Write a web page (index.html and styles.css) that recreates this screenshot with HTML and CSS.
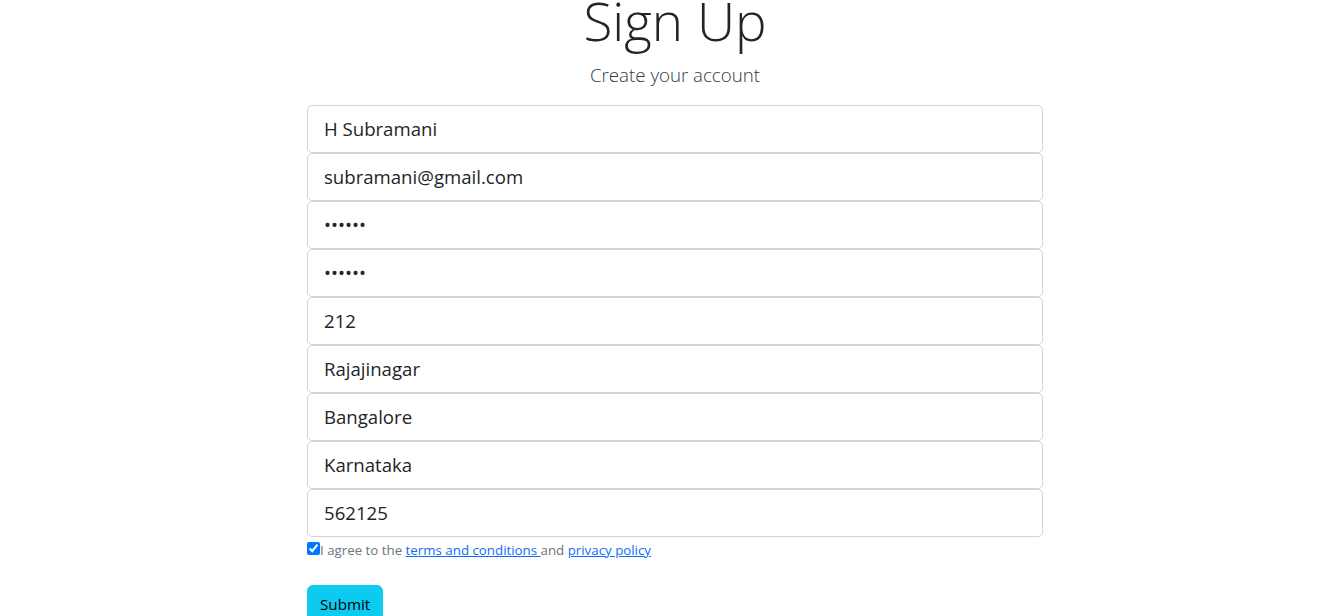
FILE: index.html
```html
<!DOCTYPE html>
<html lang="en">
<head>
<meta charset="utf-8">
<title>Sign Up</title>
<link rel="stylesheet" href="styles.css">
</head>
<body>
<main class="signup">
  <h1 class="title">Sign Up</h1>
  <p class="lead">Create your account</p>
  <form class="form">
    <div class="fields">
      <input class="field" type="text" value="H Subramani">
      <input class="field" type="email" value="subramani@gmail.com">
      <input class="field" type="password" value="123456">
      <input class="field" type="password" value="123456">
      <input class="field" type="text" value="212">
      <input class="field" type="text" value="Rajajinagar">
      <input class="field" type="text" value="Bangalore">
      <input class="field" type="text" value="Karnataka">
      <input class="field" type="text" value="562125">
    </div>
    <div class="agree">
      <input class="check" type="checkbox" checked>
      <label class="agree-text">I agree to the <a href="#" class="link">terms and conditions </a>and <a href="#" class="link">privacy policy</a></label>
    </div>
    <button class="btn" type="button">Submit</button>
  </form>
</main>
</body>
</html>
```

FILE: styles.css
```css
html, body {
  margin: 0;
  padding: 0;
  background: #fff;
}
body {
  padding-left: 7px;
  font-family: "Open Sans", "Noto Sans", sans-serif;
  color: #212529;
  overflow: hidden;
}
.signup {
  width: 736px;
  margin: 0 auto;
}
.title {
  margin: -11px 0 8px;
  font-size: 53px;
  font-weight: 300;
  line-height: 1.2;
  text-align: center;
  color: #212529;
}
.lead {
  margin: 0 0 16px;
  font-size: 18.7px;
  font-weight: 300;
  line-height: 1.5;
  text-align: center;
  color: #343a40;
}
.fields {
  display: flex;
  flex-direction: column;
}
.field {
  box-sizing: border-box;
  display: block;
  width: 100%;
  height: 48px;
  padding: 8px 16px;
  font-family: inherit;
  font-size: 18.6px;
  line-height: 1.5;
  color: #212529;
  background: #fff;
  border: 1px solid #ced4da;
  border-radius: 5px;
  outline: none;
}
.agree {
  display: flex;
  align-items: flex-start;
  margin-top: 5px;
  height: 18px;
}
.check {
  width: 13px;
  height: 13px;
  margin: 0;
  accent-color: #0075ff;
}
.agree-text {
  font-size: 13.3px;
  color: #6c757d;
  line-height: 18px;
  margin-top: -1px;
}
.link {
  color: #0d6efd;
  text-decoration: underline;
}
.btn {
  display: inline-block;
  margin-top: 25px;
  padding: 6px 12px;
  font-family: inherit;
  font-size: 15.2px;
  line-height: 24px;
  color: #000;
  background: #0dcaf0;
  border: 1px solid #0dcaf0;
  border-radius: 6px;
}
```
